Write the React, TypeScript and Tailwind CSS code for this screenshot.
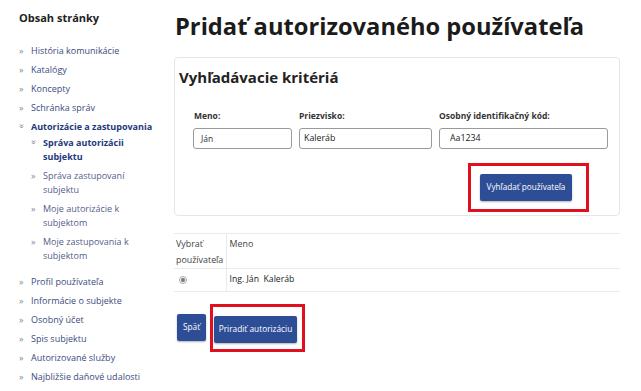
import React from "react";

const font = { fontFamily: '"Open Sans", "Noto Sans", sans-serif' };

function Chevron({ open }: { open?: boolean }) {
  return (
    <span
      className={
        "inline-block w-[12px] shrink-0 text-[9px] leading-[14px] text-[#8a8a8a] " +
        (open ? "rotate-90 origin-[3px_7px]" : "")
      }
    >
      »
    </span>
  );
}

function Item({ label }: { label: string }) {
  return (
    <li className="flex mb-[5px]">
      <Chevron />
      <span className="text-[9px] leading-[14px] text-[#3b4b7e] whitespace-nowrap">{label}</span>
    </li>
  );
}

function SubItem({ label, active }: { label: string; active?: boolean }) {
  return (
    <li className="flex mb-[5px]">
      <Chevron open={active} />
      <span
        className={
          "text-[9px] leading-[14px] " +
          (active ? "font-bold text-[#223a7a]" : "text-[#55608a]")
        }
      >
        {label}
      </span>
    </li>
  );
}

export default function App() {
  return (
    <div className="w-[641px] h-[391px] bg-white flex overflow-hidden" style={font}>
      <aside className="w-[174px] shrink-0 pl-[19px] pt-[10px]">
        <div className="text-[11px] font-bold text-[#222] leading-[16px]">Obsah stránky</div>
        <ul className="mt-[18px]">
          <Item label="História komunikácie" />
          <Item label="Katalógy" />
          <Item label="Koncepty" />
          <Item label="Schránka správ" />
          <li className="mb-[5px]">
            <div className="flex">
              <Chevron open />
              <span className="text-[9px] leading-[14px] font-bold text-[#223a7a] whitespace-nowrap">
                Autorizácie a zastupovania
              </span>
            </div>
            <ul className="mt-[2px] pl-[12px] w-[116px] pb-[2px]">
              <SubItem label="Správa autorizácii subjektu" active />
              <SubItem label="Správa zastupovaní subjektu" />
              <SubItem label="Moje autorizácie k subjektom" />
              <SubItem label="Moje zastupovania k subjektom" />
            </ul>
          </li>
          <Item label="Profil používateľa" />
          <Item label="Informácie o subjekte" />
          <Item label="Osobný účet" />
          <Item label="Spis subjektu" />
          <Item label="Autorizované služby" />
          <Item label="Najbližšie daňové udalosti" />
        </ul>
      </aside>

      <main className="w-[446px] shrink-0 pt-[9px]">
        <h1 className="text-[23.7px] leading-[34px] font-bold text-[#1b1b1b] pl-[1px] whitespace-nowrap">
          Pridať autorizovaného používateľa
        </h1>

        <section className="mt-[14px] h-[159px] border border-[#e6e6e6] rounded-[4px] pl-[18px] pr-[11px] pt-[8px]">
          <h2 className="text-[15px] leading-[22px] font-bold text-[#222] -ml-[14px]">
            Vyhľadávacie kritériá
          </h2>
          <div className="flex gap-[7px] mt-[21px]">
            <div className="w-[99px]">
              <label className="block text-[8.5px] font-bold text-[#333] leading-[14px] pl-[1px]">
                Meno:
              </label>
              <div className="mt-[5px] h-[21px] border border-[#9a9a9a] rounded-[3px] px-[7px] text-[8.5px] leading-[19px] text-[#333]">
                Ján
              </div>
            </div>
            <div className="w-[133px]">
              <label className="block text-[8.5px] font-bold text-[#333] leading-[14px]">
                Priezvisko:
              </label>
              <div className="mt-[5px] h-[21px] border border-[#9a9a9a] rounded-[3px] px-[4px] text-[8.8px] leading-[19px] text-[#222]">
                Kaleráb
              </div>
            </div>
            <div className="w-[169px]">
              <label className="block text-[8.5px] font-bold text-[#333] leading-[14px]">
                Osobný identifikačný kód:
              </label>
              <div className="mt-[5px] h-[21px] border border-[#9a9a9a] rounded-[3px] px-[10px] text-[8.8px] leading-[19px] text-[#222]">
                Aa1234
              </div>
            </div>
          </div>
          <div className="flex justify-end mt-[14px] pr-[19px]">
            <div className="border-[3px] border-[#e0101e] pl-[9px] pr-[14px] pt-[6px] pb-[8px]">
              <button className="h-[27px] w-[92px] bg-[#2d4e96] text-white text-[8.2px] rounded-[2px] shadow-[0_1px_2px_rgba(0,0,0,0.3)] whitespace-nowrap">
                Vyhľadať používateľa
              </button>
            </div>
          </div>
        </section>

        <table className="mt-[17px] w-full border-collapse table-fixed text-[8.9px] text-[#444]">
          <colgroup>
            <col className="w-[52px]" />
            <col />
          </colgroup>
          <thead>
            <tr className="border-t border-[#e4ecf0] h-[35px]">
              <th className="font-normal text-left align-top px-[2px] pt-[2px] leading-[16px] border-r border-[#e4ecf0]">
                Vybrať používateľa
              </th>
              <th className="font-normal text-left align-top px-[3px] pt-[2px] leading-[16px]">Meno</th>
            </tr>
          </thead>
          <tbody>
            <tr className="border-t border-b border-[#e4ecf0] h-[23px]">
              <td className="px-[5px] border-r border-[#e4ecf0]">
                <span className="w-[8px] h-[8px] rounded-full border border-[#aaa] bg-[#f4f4f4] flex items-center justify-center">
                  <span className="block w-[4px] h-[4px] rounded-full bg-[#777]" />
                </span>
              </td>
              <td className="px-[3px] text-[8.7px] text-[#222]">
                Ing. Ján&nbsp; Kaleráb
              </td>
            </tr>
          </tbody>
        </table>

        <div className="flex items-start mt-[12px] pl-[3px]">
          <button className="mt-[10px] h-[27px] w-[29px] bg-[#2d4e96] text-white text-[8.3px] rounded-[2px] shadow-[0_1px_2px_rgba(0,0,0,0.3)]">
            Späť
          </button>
          <div className="ml-[4px] border-[3px] border-[#e0101e] pl-[1px] pr-[5px] pt-[7px] pb-[6px]">
            <button className="h-[27px] w-[83px] bg-[#2d4e96] text-white text-[8.3px] rounded-[2px] shadow-[0_1px_2px_rgba(0,0,0,0.3)] whitespace-nowrap">
              Priradiť autorizáciu
            </button>
          </div>
        </div>
      </main>
    </div>
  );
}
